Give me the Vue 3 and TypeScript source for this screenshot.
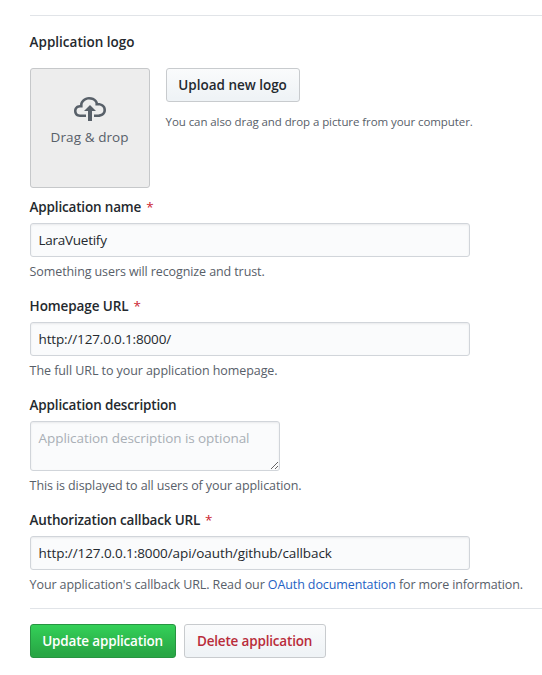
<script setup lang="ts">
import { reactive } from 'vue'

const app = reactive({
  name: 'LaraVuetify',
  homepage: 'http://127.0.0.1:8000/',
  description: '',
  callback: 'http://127.0.0.1:8000/api/oauth/github/callback',
})
</script>

<template>
  <form class="settings" @submit.prevent>
    <section class="logo-section">
      <span class="label logo-label">Application logo</span>
      <div class="logo-row">
        <div class="dropzone">
          <svg class="cloud" width="32" height="32" viewBox="0 0 16 16" aria-hidden="true">
            <path
              fill-rule="evenodd"
              d="M7 9H5l3-3 3 3H9v5H7V9zm5-4c0-.44-.91-3-4.5-3C5.08 2 3 3.92 3 6 1.02 6 0 7.52 0 9c0 1.53 1 3 3 3h3v-1.3H3c-1.62 0-1.7-1.42-1.7-1.7 0-.17.05-1.7 1.7-1.7h1.3V6c0-1.39 1.56-2.7 3.2-2.7 2.55 0 3.13 1.55 3.2 1.8v1.2H12c.81 0 2.7.22 2.7 2.2 0 2.09-2.25 2.2-2.7 2.2h-2V12h2c2.08 0 4-1.16 4-3.5C16 6.06 14.08 5 12 5z"
            />
          </svg>
          <span>Drag &amp; drop</span>
        </div>
        <div class="upload">
          <button type="button" class="btn btn-upload">Upload new logo</button>
          <p class="hint">You can also drag and drop a picture from your computer.</p>
        </div>
      </div>
    </section>

    <div class="field">
      <label class="label" for="name">Application name<b class="required">*</b></label>
      <input id="name" v-model="app.name" class="control name-input" type="text" />
      <p class="note note-name">Something users will recognize and trust.</p>
    </div>

    <div class="field">
      <label class="label label-home" for="homepage">Homepage URL<b class="required">*</b></label>
      <input id="homepage" v-model="app.homepage" class="control home-input" type="text" />
      <p class="note">The full URL to your application homepage.</p>
    </div>

    <div class="field">
      <label class="label label-description" for="description">Application description</label>
      <textarea
        id="description"
        v-model="app.description"
        class="control description"
        placeholder="Application description is optional"
      ></textarea>
      <p class="note note-description">This is displayed to all users of your application.</p>
    </div>

    <div class="field">
      <label class="label label-callback" for="callback">Authorization callback URL<b class="required">*</b></label>
      <input id="callback" v-model="app.callback" class="control" type="text" />
      <p class="note note-callback">Your application's callback URL. Read our <a class="link">OAuth documentation</a><span class="note-tail"> for more information.</span></p>
    </div>

    <div class="actions">
      <button type="submit" class="btn btn-primary">Update application</button>
      <button type="button" class="btn btn-danger">Delete application</button>
    </div>
  </form>
</template>

<style>
body {
  background: #fff;
}
</style>

<style scoped>
.settings {
  margin: 15px 0 0 29.6px;
  color: #24292e;
  font: 13.5px/20px "Open Sans", "Noto Sans", sans-serif;
  letter-spacing: -0.09px;
}
.logo-section {
  border-top: 1px solid #e1e4e8;
  padding-top: 16px;
}
.label {
  display: block;
  font-weight: 600;
  letter-spacing: -0.17px;
  white-space: nowrap;
}
.logo-label {
  letter-spacing: 0;
}
.label-home {
  letter-spacing: -0.09px;
}
.label-description {
  letter-spacing: -0.16px;
}
.label-callback {
  letter-spacing: -0.18px;
}
.required {
  margin-left: 5px;
  color: #cb2431;
  font-weight: 400;
}
.logo-row {
  display: flex;
  gap: 16px;
  margin-top: 16px;
}
.dropzone {
  box-sizing: border-box;
  width: 120px;
  height: 120px;
  padding-top: 24px;
  border: 1px solid #c6c8ca;
  border-radius: 3px;
  background: #ededed;
  color: #586069;
  display: flex;
  flex-direction: column;
  align-items: center;
  letter-spacing: 0.08px;
}
.cloud {
  fill: #586069;
  margin-bottom: 2px;
}
.hint {
  margin: 10px 0 0;
  color: #586069;
  font-size: 11.5px;
  line-height: 20px;
  letter-spacing: -0.08px;
  white-space: nowrap;
}
.field {
  display: flex;
  flex-direction: column;
  align-items: flex-start;
  margin-bottom: 14px;
}
.logo-section + .field {
  margin-top: 9px;
}
.control {
  box-sizing: border-box;
  width: 440px;
  height: 34px;
  margin: 6px 0 0;
  padding: 6px 8px;
  border: 1px solid #d1d5da;
  border-radius: 3px;
  background: #fafbfc;
  box-shadow: inset 0 1px 2px rgba(27, 31, 35, 0.075);
  color: #24292e;
  font: inherit;
  letter-spacing: -0.09px;
  outline: none;
}
.name-input {
  letter-spacing: -0.27px;
}
.home-input {
  letter-spacing: -0.16px;
}
.description {
  width: 250px;
  height: 50px;
  letter-spacing: -0.07px;
  resize: both;
}
.description::placeholder {
  color: #a9afb6;
  opacity: 1;
}
.note {
  margin: 5px 0 0;
  color: #586069;
  font-size: 12.5px;
  line-height: 20px;
  letter-spacing: -0.07px;
  white-space: nowrap;
}
.note-name,
.note-description,
.note-callback {
  letter-spacing: -0.1px;
}
.note-tail {
  letter-spacing: -0.14px;
}
.link {
  color: #1f62c4;
}
.actions {
  display: flex;
  gap: 8px;
  margin-top: -1px;
  padding-top: 15px;
  border-top: 1px solid #e1e4e8;
}
.btn {
  box-sizing: border-box;
  height: 34px;
  padding: 0;
  border: 1px solid #c8cbce;
  border-radius: 3px;
  background: linear-gradient(180deg, #fafbfc, #eff3f6 90%);
  color: #24292e;
  font: inherit;
  font-weight: 600;
  letter-spacing: -0.18px;
  white-space: nowrap;
}
.btn-upload {
  display: block;
  width: 134px;
  letter-spacing: -0.02px;
}
.btn-primary {
  width: 146px;
  border-color: #279441;
  background: linear-gradient(180deg, #34d058, #28a745 90%);
  color: #fff;
}
.btn-danger {
  width: 142px;
  color: #b92c3a;
}
</style>
